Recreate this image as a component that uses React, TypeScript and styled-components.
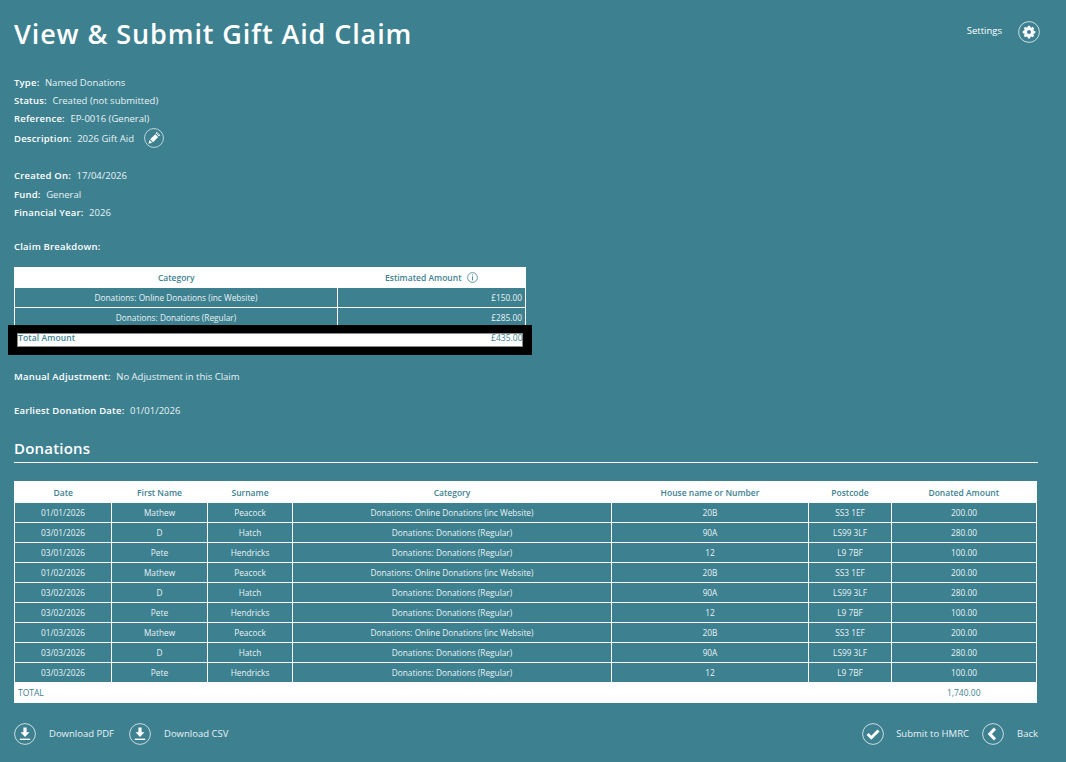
import styled, { createGlobalStyle } from 'styled-components'
import type { ReactElement, ReactNode } from 'react'

const TEAL = '#3d8191'

const GlobalStyle = createGlobalStyle`
  html, body {
    margin: 0;
    padding: 0;
    background: ${TEAL};
  }
  body {
    font-family: "Open Sans", "Liberation Sans", sans-serif;
    color: #fff;
    font-size: 9px;
  }
`

type DonationRow = [string, string, string, string, string, string, string]

const ONLINE = 'Donations: Online Donations (inc Website)'
const REGULAR = 'Donations: Donations (Regular)'

const donations: DonationRow[] = [
  ['01/01/2026', 'Mathew', 'Peacock', ONLINE, '20B', 'SS3 1EF', '200.00'],
  ['03/01/2026', 'D', 'Hatch', REGULAR, '90A', 'LS99 3LF', '280.00'],
  ['03/01/2026', 'Pete', 'Hendricks', REGULAR, '12', 'L9 7BF', '100.00'],
  ['01/02/2026', 'Mathew', 'Peacock', ONLINE, '20B', 'SS3 1EF', '200.00'],
  ['03/02/2026', 'D', 'Hatch', REGULAR, '90A', 'LS99 3LF', '280.00'],
  ['03/02/2026', 'Pete', 'Hendricks', REGULAR, '12', 'L9 7BF', '100.00'],
  ['01/03/2026', 'Mathew', 'Peacock', ONLINE, '20B', 'SS3 1EF', '200.00'],
  ['03/03/2026', 'D', 'Hatch', REGULAR, '90A', 'LS99 3LF', '280.00'],
  ['03/03/2026', 'Pete', 'Hendricks', REGULAR, '12', 'L9 7BF', '100.00'],
]

const headings = ['Date', 'First Name', 'Surname', 'Category', 'House name or Number', 'Postcode', 'Donated Amount']
const colWidths = [97, 96, 85, 319, 197, 83, 145]

const Circle = ({ size, children }: { size: number; children: ReactNode }): ReactElement => (
  <svg width={size} height={size} viewBox="0 0 22 22" fill="none">
    <circle cx="11" cy="11" r="10.4" stroke="#fff" strokeOpacity="0.8" strokeWidth="0.9" />
    {children}
  </svg>
)

const GearIcon = (): ReactElement => (
  <Circle size={22}>
    <path
      fill="#fff"
      fillRule="evenodd"
      d="M9.9 4.8h2.2l.3 1.5 1 .4 1.3-.85 1.55 1.55-.85 1.3.4 1 1.5.3v2.2l-1.5.3-.4 1 .85 1.3-1.55 1.55-1.3-.85-1 .4-.3 1.5H9.9l-.3-1.5-1-.4-1.3.85-1.55-1.55.85-1.3-.4-1-1.5-.3V9.9l1.5-.3.4-1-.85-1.3L7.3 5.75l1.3.85 1-.4zM11 9a2 2 0 1 0 0 4 2 2 0 0 0 0-4z"
    />
  </Circle>
)

const PencilIcon = (): ReactElement => (
  <Circle size={20}>
    <path fill="#fff" d="M12.4 6.8l3.2 3.2-5.6 5.6-3.2-3.2z" />
    <path fill="none" stroke="#fff" strokeWidth="1" d="M13.2 5.6l.9-.9 3.2 3.2-.9.9z" />
    <path fill="#fff" d="M6.1 13.2l2.9 2.9-4.1 1.2z" />
  </Circle>
)

const DownloadIcon = (): ReactElement => (
  <Circle size={22}>
    <path fill="#fff" d="M9.4 4.4h3.2v4.8h2.9L11 13.9 6.5 9.2h2.9z" />
    <rect x="5.8" y="15.6" width="10.4" height="1.4" fill="#fff" />
  </Circle>
)

const CheckIcon = (): ReactElement => (
  <Circle size={22}>
    <path stroke="#fff" strokeWidth="2.9" d="M5.6 11l3.7 3.7 7.2-7.3" />
  </Circle>
)

const BackIcon = (): ReactElement => (
  <Circle size={22}>
    <path stroke="#fff" strokeWidth="3" d="M13 5.6L7.8 11l5.2 5.4" />
  </Circle>
)

const InfoIcon = (): ReactElement => (
  <svg width="11" height="11" viewBox="0 0 11 11" fill="none">
    <circle cx="5.5" cy="5.5" r="4.9" stroke={TEAL} strokeWidth="0.8" />
    <path stroke={TEAL} strokeWidth="0.9" d="M5.5 2.4v1M5.5 4.4v4" />
  </svg>
)

const Detail = ({ label, value }: { label: string; value: string }): ReactElement => (
  <DetailRow>
    <strong>{label}:</strong>
    <span>{value}</span>
  </DetailRow>
)

const App = (): ReactElement => (
  <Page>
    <GlobalStyle />
    <Header>
      <Title>View &amp; Submit Gift Aid Claim</Title>
      <SettingsLink>
        Settings
        <GearIcon />
      </SettingsLink>
    </Header>

    <DetailGroup>
      <Detail label="Type" value="Named Donations" />
      <Detail label="Status" value="Created (not submitted)" />
      <Detail label="Reference" value="EP-0016 (General)" />
      <DescriptionRow>
        <strong>Description:</strong>
        <span>2026 Gift Aid</span>
        <PencilIcon />
      </DescriptionRow>
    </DetailGroup>

    <DatesGroup>
      <CreatedRow>
        <strong>Created On:</strong>
        <span>17/04/2026</span>
      </CreatedRow>
      <Detail label="Fund" value="General" />
      <Detail label="Financial Year" value="2026" />
    </DatesGroup>

    <BreakdownLabel>Claim Breakdown:</BreakdownLabel>

    <BreakdownWrap>
      <DataTable>
        <colgroup>
          <col style={{ width: 323 }} />
          <col />
        </colgroup>
        <thead>
          <tr>
            <BreakdownHead>Category</BreakdownHead>
            <BreakdownHead>
              <EstimateHead>
                Estimated Amount
                <InfoIcon />
              </EstimateHead>
            </BreakdownHead>
          </tr>
        </thead>
        <tbody>
          <tr>
            <BodyCell>{ONLINE}</BodyCell>
            <AmountCell>£150.00</AmountCell>
          </tr>
          <tr>
            <BodyCell>{REGULAR}</BodyCell>
            <AmountCell>£285.00</AmountCell>
          </tr>
        </tbody>
      </DataTable>
      <TotalBar>
        <TotalLabel>Total Amount</TotalLabel>
        <span>£435.00</span>
      </TotalBar>
    </BreakdownWrap>

    <AdjustmentRow>
      <strong>Manual Adjustment:</strong>
      <span>No Adjustment in this Claim</span>
    </AdjustmentRow>
    <EarliestRow>
      <strong>Earliest Donation Date:</strong>
      <span>01/01/2026</span>
    </EarliestRow>

    <SectionTitle>Donations</SectionTitle>

    <DonationsTable>
      <colgroup>
        {colWidths.map((w, i) => (
          <col key={i} style={{ width: w }} />
        ))}
      </colgroup>
      <thead>
        <tr>
          {headings.map(h => (
            <HeadCell key={h}>{h}</HeadCell>
          ))}
        </tr>
      </thead>
      <tbody>
        {donations.map((row, i) => (
          <tr key={i}>
            {row.map((cell, j) => (
              <BodyCell key={j}>{cell}</BodyCell>
            ))}
          </tr>
        ))}
      </tbody>
      <tfoot>
        <tr>
          <FootLabel colSpan={6}>TOTAL</FootLabel>
          <FootCell>1,740.00</FootCell>
        </tr>
      </tfoot>
    </DonationsTable>

    <Footer>
      <ActionGroup>
        <Action>
          <DownloadIcon />
          Download PDF
        </Action>
        <Action>
          <DownloadIcon />
          Download CSV
        </Action>
      </ActionGroup>
      <RightActions>
        <SubmitAction>
          <CheckIcon />
          Submit to HMRC
        </SubmitAction>
        <Action>
          <BackIcon />
          Back
        </Action>
      </RightActions>
    </Footer>
  </Page>
)

export default App

const Page = styled.div`
  width: 1066px;
  height: 762px;
  box-sizing: border-box;
  padding: 0 28px 0 14px;
  overflow: hidden;
  background: ${TEAL};
`

const Header = styled.header`
  display: flex;
  justify-content: space-between;
  align-items: flex-start;
  height: 73px;
  padding-top: 15px;
  box-sizing: border-box;
`

const Title = styled.h1`
  margin: 0;
  font-size: 27px;
  line-height: 38px;
  font-weight: 600;
  letter-spacing: 0.9px;
`

const SettingsLink = styled.div`
  display: flex;
  align-items: center;
  gap: 16px;
  height: 22px;
  margin: 5px -2px 0 0;
  font-size: 9.5px;
  line-height: 20px;
  svg {
    margin-top: 1px;
  }
`

const DetailGroup = styled.div`
  display: flex;
  flex-direction: column;
  height: 93px;
`

const DatesGroup = styled(DetailGroup)`
  height: 71px;
`

const DetailRow = styled.div`
  display: flex;
  align-items: center;
  gap: 5.5px;
  height: 18px;
  font-size: 9.5px;
  color: #e8f1f3;
  strong {
    font-weight: 600;
    letter-spacing: 0.2px;
    color: #fff;
  }
`

const DescriptionRow = styled(DetailRow)`
  height: 22px;
  svg {
    margin-left: 5px;
  }
`

const CreatedRow = styled(DetailRow)`
  height: 19px;
`

const BreakdownLabel = styled(DetailRow)`
  margin-bottom: 12px;
  font-weight: 600;
  letter-spacing: 0.2px;
  color: #fff;
`

const BreakdownWrap = styled.div`
  width: 512px;
`

const DataTable = styled.table`
  width: 100%;
  table-layout: fixed;
  border-collapse: collapse;
  background: ${TEAL};
  border: 1px solid #fff;
`

const DonationsTable = styled(DataTable)`
  width: 1022px;
`

const HeadCell = styled.th`
  height: 20px;
  padding: 0;
  background: #fff;
  color: ${TEAL};
  font-size: 8.5px;
  font-weight: 600;
  text-align: center;
`

const BreakdownHead = styled(HeadCell)`
  height: 19px;
`

const EstimateHead = styled.span`
  display: inline-flex;
  align-items: center;
  gap: 5px;
`

const BodyCell = styled.td`
  height: 19px;
  padding: 0;
  border: 1px solid #fff;
  color: #e8f1f3;
  font-size: 8.3px;
  text-align: center;
`

const AmountCell = styled(BodyCell)`
  padding-right: 3px;
  text-align: right;
`

const FootCell = styled.td`
  height: 19px;
  padding: 0;
  background: #fff;
  color: ${TEAL};
  font-size: 8.5px;
  text-align: center;
`

const FootLabel = styled(FootCell)`
  padding-left: 3px;
  text-align: left;
`

const TotalBar = styled.div`
  position: relative;
  display: flex;
  justify-content: space-between;
  height: 14px;
  margin: -3px -5.5px 0 -6px;
  padding: 0 0 0 1px;
  border-style: solid;
  border-color: #000;
  border-width: 8px 9px;
  box-shadow: inset 0 0 0 1px #8a8a8a;
  background: #fff;
  color: ${TEAL};
  font-size: 8.5px;
  line-height: 10px;
`

const TotalLabel = styled.span`
  font-weight: 600;
  letter-spacing: 0.1px;
`

const AdjustmentRow = styled(DetailRow)`
  margin-top: 12px;
`

const EarliestRow = styled(DetailRow)`
  margin-top: 16px;
`

const SectionTitle = styled.h2`
  margin: 18px 0 18px;
  padding-bottom: 3px;
  border-bottom: 1px solid #fff;
  font-size: 15px;
  line-height: 22px;
  font-weight: 600;
  letter-spacing: 0.2px;
`

const Footer = styled.footer`
  display: flex;
  justify-content: space-between;
  align-items: center;
  margin-top: 19px;
`

const ActionGroup = styled.div`
  display: flex;
  align-items: center;
  gap: 15px;
`

const RightActions = styled(ActionGroup)`
  gap: 13px;
`

const Action = styled.div`
  display: flex;
  align-items: center;
  gap: 13px;
  font-size: 9.5px;
  color: #e8f1f3;
  svg {
    margin-top: 1px;
  }
`

const SubmitAction = styled(Action)`
  gap: 12px;
`
